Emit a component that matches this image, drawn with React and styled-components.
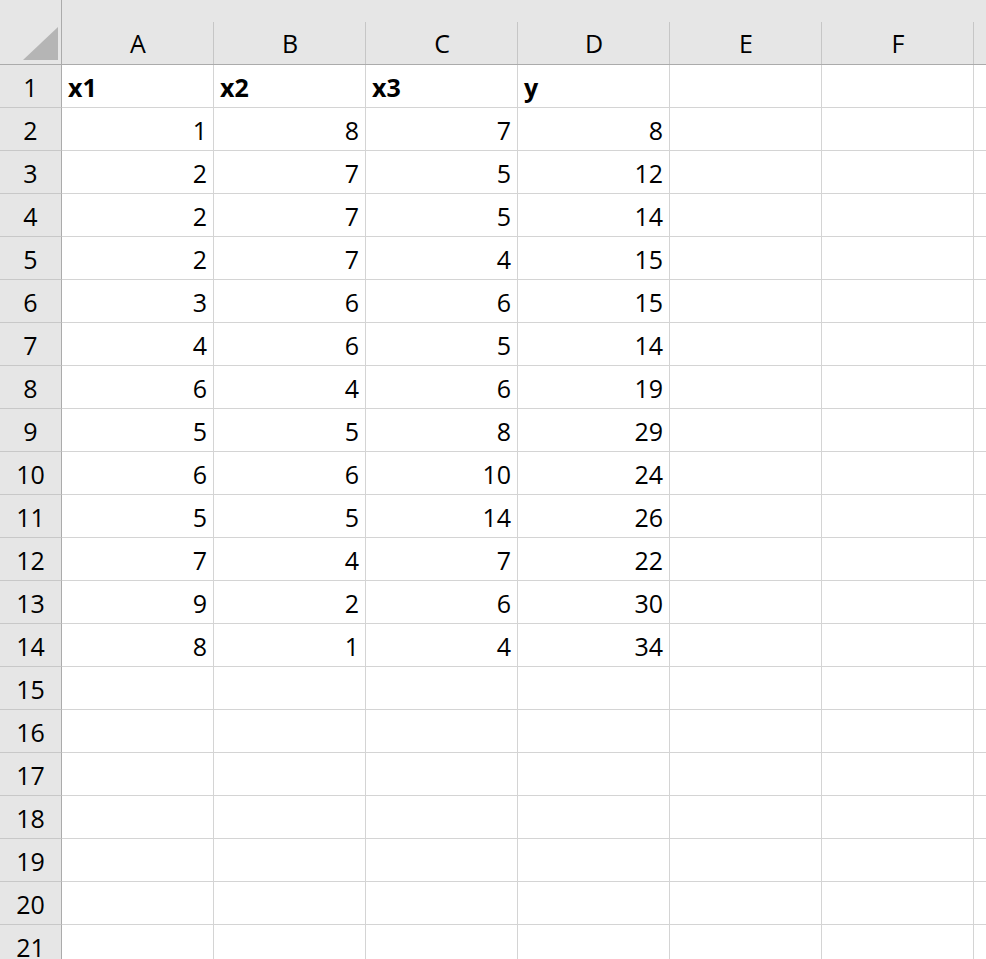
import React from "react";
import styled, { createGlobalStyle } from "styled-components";

const Global = createGlobalStyle`
  html, body { margin: 0; padding: 0; background: #fff; overflow: hidden; }
  body { font-family: "Open Sans", "Liberation Sans", sans-serif; }
`;

const Sheet = styled.div`
  display: grid;
  grid-template-columns: 62px repeat(6, 152px) 1fr;
  grid-template-rows: 65px repeat(21, 43px);
  width: 986px;
  height: 959px;
  overflow: hidden;
  font-family: "Open Sans", "Liberation Sans", sans-serif;
  font-size: 25px;
  color: #000;
`;

const Corner = styled.div`
  position: relative;
  background: #e6e6e6;
  border-right: 1px solid #ababab;
  border-bottom: 1px solid #ababab;
`;

const CornerTriangle = styled.svg`
  position: absolute;
  left: 23px;
  top: 27px;
`;

const ColHead = styled.div`
  position: relative;
  background: #e6e6e6;
  border-bottom: 1px solid #ababab;
  display: flex;
  align-items: center;
  justify-content: center;
  padding-top: 22px;
  box-sizing: border-box;
  line-height: 1;
  &::after {
    content: "";
    position: absolute;
    right: 0;
    top: 22px;
    bottom: 0;
    width: 1px;
    background: #c6c6c6;
  }
`;

const RowHead = styled.div`
  background: #e6e6e6;
  border-right: 1px solid #ababab;
  border-bottom: 1px solid #c8c8c8;
  display: flex;
  align-items: flex-end;
  justify-content: center;
  padding-bottom: 4px;
  box-sizing: border-box;
  line-height: 1.3;
`;

const Cell = styled.div`
  border-right: 1px solid #d4d4d4;
  border-bottom: 1px solid #d4d4d4;
  display: flex;
  align-items: flex-end;
  justify-content: ${(p) => (p.$num ? "flex-end" : "flex-start")};
  padding: 0 6px 4px 6px;
  box-sizing: border-box;
  line-height: 1.3;
  font-weight: ${(p) => (p.$bold ? 700 : 400)};
  white-space: nowrap;
`;

const cols = ["A", "B", "C", "D", "E", "F"];
const header = ["x1", "x2", "x3", "y"];
const data = [
  [1, 8, 7, 8],
  [2, 7, 5, 12],
  [2, 7, 5, 14],
  [2, 7, 4, 15],
  [3, 6, 6, 15],
  [4, 6, 5, 14],
  [6, 4, 6, 19],
  [5, 5, 8, 29],
  [6, 6, 10, 24],
  [5, 5, 14, 26],
  [7, 4, 7, 22],
  [9, 2, 6, 30],
  [8, 1, 4, 34],
];

export default function App() {
  const rows = [];
  for (let r = 1; r <= 21; r++) {
    const cells = [];
    for (let c = 0; c < 7; c++) {
      let content = "";
      let num = false;
      let bold = false;
      if (c < 4) {
        if (r === 1) {
          content = header[c];
          bold = true;
        } else if (r - 2 < data.length) {
          content = data[r - 2][c];
          num = true;
        }
      }
      cells.push(
        <Cell key={`c${r}-${c}`} $num={num} $bold={bold}>
          {content}
        </Cell>
      );
    }
    rows.push(
      <React.Fragment key={`r${r}`}>
        <RowHead>{r}</RowHead>
        {cells}
      </React.Fragment>
    );
  }
  return (
    <>
      <Global />
      <Sheet>
        <Corner>
          <CornerTriangle width="36" height="34" viewBox="0 0 36 34">
            <polygon points="35,0 35,33 0,33" fill="#b5b5b5" />
          </CornerTriangle>
        </Corner>
        {cols.map((c) => (
          <ColHead key={c}>{c}</ColHead>
        ))}
        <ColHead />
        {rows}
      </Sheet>
    </>
  );
}
